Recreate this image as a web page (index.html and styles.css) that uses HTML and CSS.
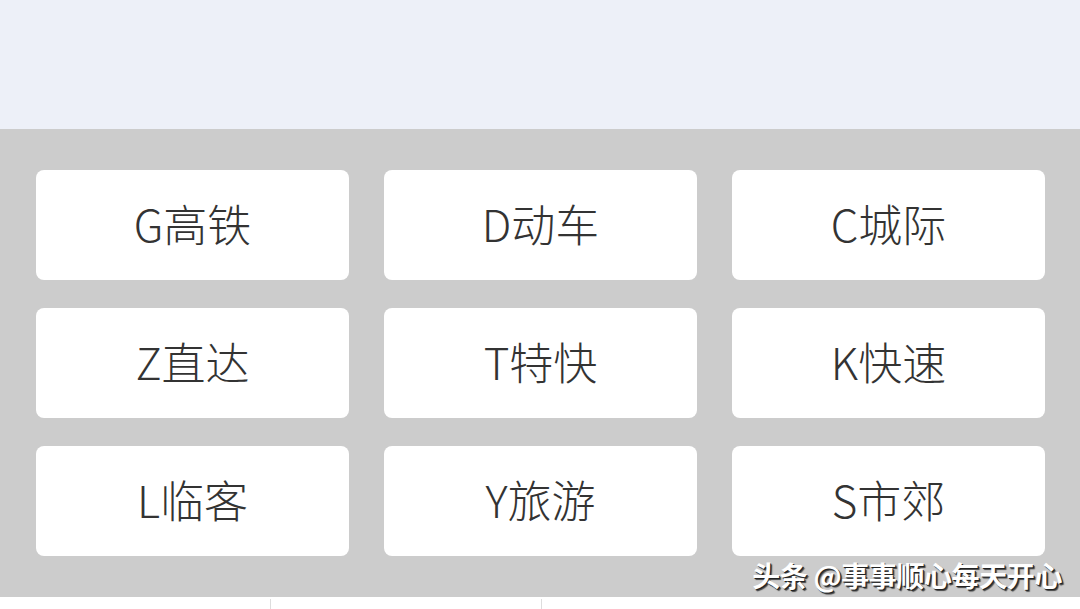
FILE: index.html
```html
<!DOCTYPE html>
<html lang="zh">
<head>
<meta charset="utf-8">
<link rel="stylesheet" href="styles.css">
</head>
<body>
<div class="page">
  <div class="top"></div>
  <div class="panel">
    <div class="grid">
      <div class="btn">G高铁</div>
      <div class="btn">D动车</div>
      <div class="btn">C城际</div>
      <div class="btn">Z直达</div>
      <div class="btn">T特快</div>
      <div class="btn">K快速</div>
      <div class="btn">L临客</div>
      <div class="btn">Y旅游</div>
      <div class="btn">S市郊</div>
    </div>
    <div class="watermark">头条 @事事顺心每天开心</div>
  </div>
  <div class="bottom">
    <div class="cell"></div>
    <div class="cell"></div>
    <div class="cell last"></div>
  </div>
</div>
</body>
</html>
```
FILE: styles.css
```css
html, body {
  margin: 0;
  padding: 0;
}
body {
  width: 1080px;
  height: 609px;
  overflow: hidden;
  font-family: "Noto Sans CJK SC", "Noto Sans", sans-serif;
}
.page {
  display: flex;
  flex-direction: column;
  height: 609px;
}
.top {
  height: 129px;
  background: #edf0f8;
}
.panel {
  position: relative;
  height: 468px;
  background: #cccccc;
  padding: 41px 35px 0 36px;
  box-sizing: border-box;
}
.grid {
  display: grid;
  grid-template-columns: repeat(3, 313px);
  grid-auto-rows: 110px;
  column-gap: 35px;
  row-gap: 28px;
}
.btn {
  background: #ffffff;
  border-radius: 8px;
  display: flex;
  align-items: center;
  justify-content: center;
  font-size: 44px;
  font-weight: 300;
  color: #333333;
  line-height: 1;
  padding-bottom: 5px;
  box-sizing: border-box;
}
.watermark {
  position: absolute;
  right: 18px;
  top: 432px;
  font-size: 28px;
  font-weight: 700;
  line-height: 1;
  color: #ffffff;
  text-shadow: 1px 1px 0 #222, 2px 2px 1px #444;
  letter-spacing: -0.4px;
}
.bottom {
  flex: 1;
  background: #ffffff;
  display: flex;
  padding-top: 2px;
}
.cell {
  width: 270px;
  border-right: 1px solid #dddddd;
}
.cell.last {
  border-right: none;
}
```
